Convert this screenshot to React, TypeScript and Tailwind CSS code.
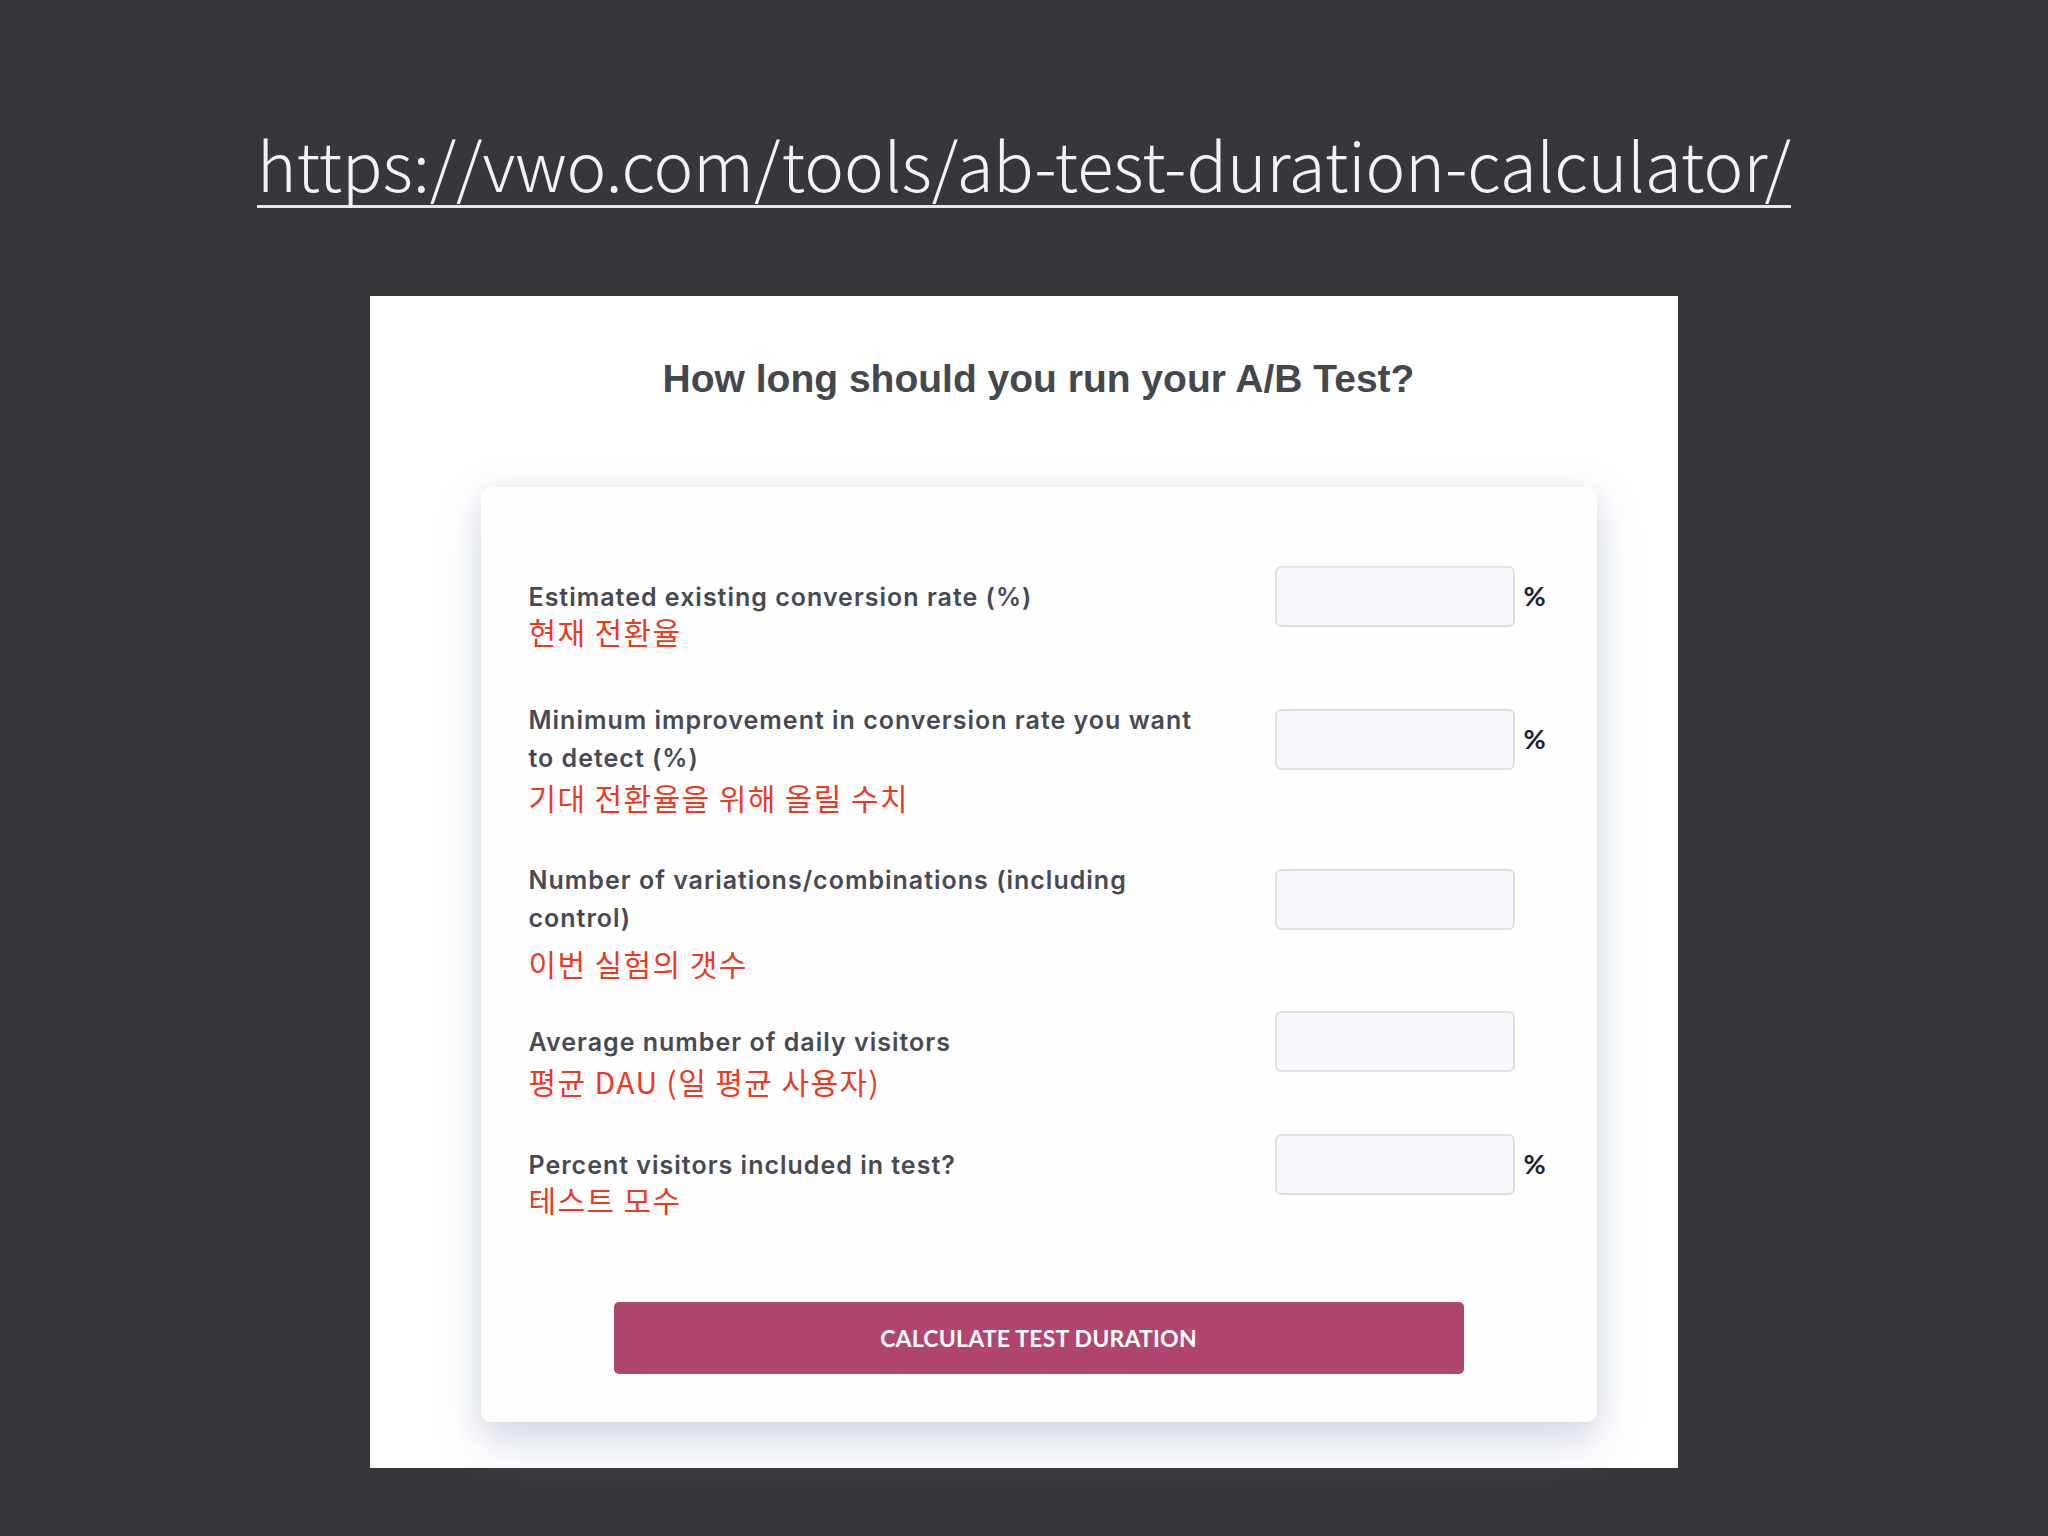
import React from 'react';

interface Field {
  label: string;
  ko: string;
  percent: boolean;
  rowClass: string;
  koClass: string;
}

const fields: Field[] = [
  {
    label: 'Estimated existing conversion rate (%)',
    ko: '현재 전환율',
    percent: true,
    rowClass: 'mt-0',
    koClass: '-mt-[14px]',
  },
  {
    label: 'Minimum improvement in conversion rate you want to detect (%)',
    ko: '기대 전환율을 위해 올릴 수치',
    percent: true,
    rowClass: 'mt-[52px]',
    koClass: 'mt-[2px]',
  },
  {
    label: 'Number of variations/combinations (including control)',
    ko: '이번 실험의 갯수',
    percent: false,
    rowClass: 'mt-[46px]',
    koClass: 'mt-[8px]',
  },
  {
    label: 'Average number of daily visitors',
    ko: '평균 DAU (일 평균 사용자)',
    percent: false,
    rowClass: 'mt-[30px]',
    koClass: '-mt-[9px]',
  },
  {
    label: 'Percent visitors included in test?',
    ko: '테스트 모수',
    percent: true,
    rowClass: 'mt-[35px]',
    koClass: '-mt-[14px]',
  },
];

const FieldRow: React.FC<{ field: Field }> = ({ field }) => (
  <div className={field.rowClass}>
    <div className="flex items-center">
      <p className="w-[680px] shrink-0 font-['Inter',sans-serif] text-[25px] font-semibold leading-[38px] tracking-[1px] text-[#474a52]">
        {field.label}
      </p>
      <div className="ml-[66px] flex items-center">
        <div className="h-[61px] w-[240px] rounded-[6px] border-2 border-[#dfe0e4] bg-[#f6f8fc]" />
        {field.percent && (
          <span className="ml-[9px] font-['Lato',sans-serif] text-[27px] font-bold text-[#1c2233]">%</span>
        )}
      </div>
    </div>
    <p
      className={`${field.koClass} font-['Noto_Sans_CJK_KR',sans-serif] text-[30px] leading-[36px] tracking-[1.4px] text-[#e93a24]`}
    >
      {field.ko}
    </p>
  </div>
);

export default function App() {
  return (
    <div className="min-h-screen w-full bg-[#36373b] pt-[129px]">
      <div className="flex justify-center">
        <span className="border-b-[3px] border-[#e6e6ea] pb-[9px] font-['Noto_Sans_CJK_KR','Noto_Sans',sans-serif] text-[67px] font-light leading-none text-[#f3f3f5]">
          https://vwo.com/tools/ab-test-duration-calculator/
        </span>
      </div>

      <div className="mx-auto mt-[88px] flex h-[1172px] w-[1308px] flex-col items-center bg-white pl-[29px] pt-[60px]">
        <h1 className="font-['Liberation_Sans',Arial,sans-serif] text-[39px] font-bold leading-[46px] text-[#44474e]">
          How long should you run your A/B Test?
        </h1>

        <div className="mt-[85px] w-[1116px] rounded-[10px] bg-[#fefeff] px-[48px] pb-[48px] pt-[79px] shadow-[0_22px_40px_rgba(170,182,206,0.45),0_0_24px_rgba(200,208,224,0.35)]">
          {fields.map((f) => (
            <FieldRow key={f.label} field={f} />
          ))}
          <div className="mt-[85px] flex justify-center">
            <button className="h-[72px] w-[850px] rounded-[5px] bg-[#b04670] font-['Lato',sans-serif] text-[23px] font-bold uppercase tracking-[0.2px] text-white">
              Calculate Test Duration
            </button>
          </div>
        </div>
      </div>
    </div>
  );
}
